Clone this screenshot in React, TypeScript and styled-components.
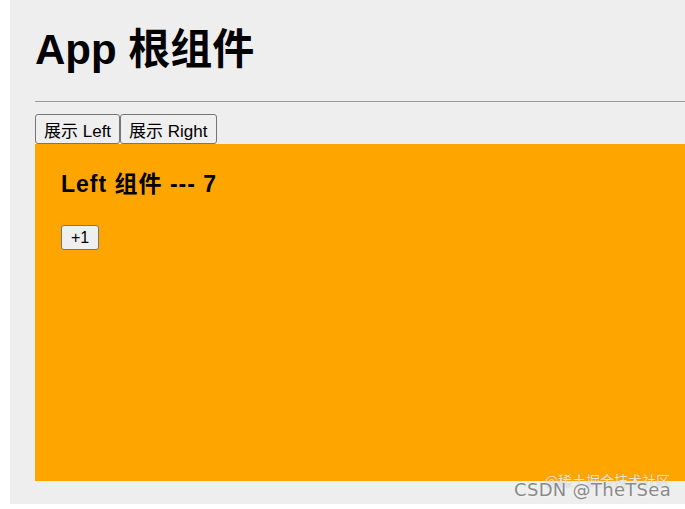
import styled, { createGlobalStyle } from "styled-components";

const GlobalStyle = createGlobalStyle`
  html, body {
    margin: 0;
    padding: 0;
    background: #fff;
    overflow: hidden;
  }
  body {
    font-family: "Liberation Sans", "Noto Sans CJK SC", sans-serif;
    color: #000;
  }
`;

const Page = styled.div`
  position: relative;
  width: 685px;
  height: 509px;
  overflow: hidden;
`;

const AppBox = styled.div`
  margin-left: 10px;
  height: 504px;
  box-sizing: border-box;
  background: #eeeeee;
  padding: 0 0 23px 25px;
  display: flex;
  flex-direction: column;
`;

const Title = styled.h1`
  margin: 0;
  padding-top: 22px;
  font-size: 42px;
  line-height: 56px;
  font-weight: 700;
`;

const Divider = styled.hr`
  margin: 23px 0 12px 0;
  height: 0;
  border: none;
  border-top: 1px solid #9c9c9c;
`;

const Tabs = styled.div`
  display: flex;
`;

const Button = styled.button<{ $small?: boolean }>`
  height: ${(p) => (p.$small ? "25px" : "30px")};
  padding: ${(p) => (p.$small ? "0 9px" : "0 8px")};
  font-family: "Liberation Sans", "Noto Sans CJK SC", sans-serif;
  font-size: ${(p) => (p.$small ? "16px" : "17px")};
  color: #000;
  background: #efefef;
  border: 1px solid #767676;
  border-radius: 3px;
  cursor: pointer;
`;

const Panel = styled.div`
  flex: 1;
  background: #ffa500;
  padding: 25px 26px 0;
  display: flex;
  flex-direction: column;
  align-items: flex-start;
`;

const PanelTitle = styled.h3`
  margin: 0 0 26px;
  font-size: 23px;
  line-height: 30px;
  font-weight: 700;
  letter-spacing: 1px;
`;

const Watermark = styled.div`
  position: absolute;
  right: 14px;
  bottom: 9px;
  font-family: "DejaVu Sans", "Noto Sans CJK SC", sans-serif;
  font-size: 18px;
  color: #8a8a8a;
  text-shadow: 0 0 2px #fff;
  letter-spacing: 0.3px;
`;

const SubMark = styled.div`
  position: absolute;
  right: 15px;
  bottom: 19px;
  font-family: "Noto Sans CJK SC", sans-serif;
  font-size: 14px;
  color: rgba(255, 255, 255, 0.75);
  text-shadow: 0 0 1px rgba(120, 120, 120, 0.6);
`;

export default function App() {
  return (
    <Page>
      <GlobalStyle />
      <AppBox>
        <Title>App 根组件</Title>
        <Divider />
        <Tabs>
          <Button>展示 Left</Button>
          <Button>展示 Right</Button>
        </Tabs>
        <Panel>
          <PanelTitle>Left 组件 --- 7</PanelTitle>
          <Button $small>+1</Button>
        </Panel>
      </AppBox>
      <SubMark>@稀土掘金技术社区</SubMark>
      <Watermark>CSDN @TheTSea</Watermark>
    </Page>
  );
}
